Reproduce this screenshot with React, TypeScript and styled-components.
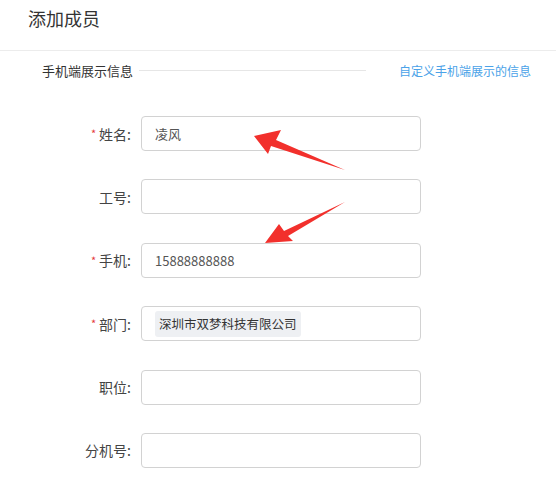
import React from "react";
import styled, { createGlobalStyle } from "styled-components";

const Global = createGlobalStyle`
  html, body { margin: 0; padding: 0; background: #fff; }
  body { font-family: "Noto Sans CJK SC", "Noto Sans", sans-serif; color: #333; }
  * { box-sizing: border-box; }
`;

const Page = styled.div`
  position: relative;
  width: 556px;
  height: 486px;
  overflow: hidden;
  background: #fff;
`;

const Header = styled.div`
  height: 51px;
  padding: 4px 0 0 28px;
  border-bottom: 1px solid #ececec;
`;

const Title = styled.h1`
  margin: 0;
  font-size: 18px;
  font-weight: 400;
  color: #333;
  line-height: 28px;
`;

const Section = styled.div`
  display: flex;
  align-items: center;
  padding: 4px 25px 0 42px;
  height: 34px;
`;

const SectionTitle = styled.span`
  font-size: 13px;
  color: #333;
  white-space: nowrap;
`;

const Rule = styled.div`
  flex: 1;
  height: 1px;
  background: #e6e6e6;
  margin: 0 33px 0 6px;
`;

const Link = styled.a`
  font-size: 12px;
  color: #4aa2e8;
  white-space: nowrap;
  text-decoration: none;
`;

const Form = styled.div`
  display: flex;
  flex-direction: column;
  gap: 28.4px;
  padding-top: 31px;
`;

const Row = styled.div`
  display: flex;
  align-items: center;
  height: 35px;
`;

const Label = styled.label`
  width: 131px;
  display: flex;
  justify-content: flex-end;
  align-items: center;
  font-size: 14px;
  color: #444;
  margin-right: 10px;
`;

const Star = styled.span`
  color: #e4393c;
  font-size: 11px;
  margin-right: 3px;
  line-height: 1;
`;

const Field = styled.div`
  width: 280px;
  height: 35px;
  border: 1px solid #d2d2d2;
  border-radius: 4px;
  display: flex;
  align-items: center;
  padding: 0 13px;
  font-size: 13px;
  color: #555;
  background: #fff;
`;

const Tag = styled.span`
  background: #eef0f3;
  border-radius: 3px;
  padding: 4px 4px;
  font-size: 12.5px;
  color: #333;
  line-height: 18px;
`;

const Overlay = styled.svg`
  position: absolute;
  left: 0;
  top: 0;
  pointer-events: none;
`;

type R = { label: string; req?: boolean; value?: string; tag?: boolean };
const rows: R[] = [
  { label: "姓名", req: true, value: "凌风" },
  { label: "工号" },
  { label: "手机", req: true, value: "15888888888" },
  { label: "部门", req: true, value: "深圳市双梦科技有限公司", tag: true },
  { label: "职位" },
  { label: "分机号" },
];

export default function App() {
  return (
    <Page>
      <Global />
      <Header>
        <Title>添加成员</Title>
      </Header>
      <Section>
        <SectionTitle>手机端展示信息</SectionTitle>
        <Rule />
        <Link>自定义手机端展示的信息</Link>
      </Section>
      <Form>
        {rows.map((r) => (
          <Row key={r.label}>
            <Label>
              {r.req && <Star>*</Star>}
              {r.label}:
            </Label>
            <Field>{r.tag ? <Tag>{r.value}</Tag> : r.value}</Field>
          </Row>
        ))}
      </Form>
      <Overlay width="556" height="486" viewBox="0 0 556 486">
        <polygon
          points="254,136 281,130 276,140 345,170 271,146 268,154"
          fill="#f2302c"
        />
        <polygon
          points="265,243 279,224 284,231 345,202 288,236 293,241"
          fill="#f2302c"
        />
      </Overlay>
    </Page>
  );
}
